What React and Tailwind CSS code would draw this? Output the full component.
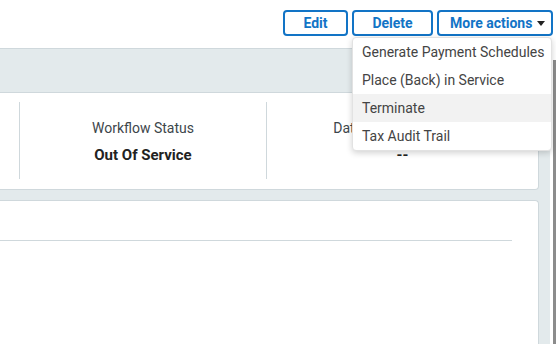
import React from "react";

const actions = ["Generate Payment Schedules", "Place (Back) in Service", "Terminate", "Tax Audit Trail"];

function App() {
    return (
        <div className="relative w-[556px] h-[344px] overflow-hidden bg-white flex flex-col font-['Roboto',sans-serif]">
            {/* top action bar */}
            <div className="h-[48px] shrink-0 flex justify-end items-start pt-[10px] pr-[3px] gap-[4px]">
                <button className="h-[26px] w-[65px] border-2 border-[#1274c6] rounded-[4px] text-[14px] font-bold text-[#1274c6] leading-none">
                    Edit
                </button>
                <button className="h-[26px] w-[81px] border-2 border-[#1274c6] rounded-[4px] text-[14px] font-bold text-[#1274c6] leading-none">
                    Delete
                </button>
                <button className="h-[26px] w-[116px] border-2 border-[#1274c6] rounded-[4px] text-[14px] font-bold text-[#1274c6] leading-none whitespace-nowrap flex items-center justify-between pl-[11px] pr-[6px]">
                    More actions
                    <span className="w-0 h-0 border-l-[4px] border-r-[4px] border-t-[5px] border-l-transparent border-r-transparent border-t-[#222]" />
                </button>
            </div>

            <div className="flex flex-1 min-h-0">
                {/* main panel */}
                <div className="w-[550px] flex flex-col bg-[#e3eaec] border-t border-[#cfd8dc]">
                    <div className="h-[43px] shrink-0" />
                    <div className="h-[98px] shrink-0 mr-[11px] bg-white border border-l-0 border-[#cfd8dc] rounded-r-[4px] flex pt-[9px] pb-[10px]">
                        <div className="w-[20px] border-r border-[#cfd8dc]" />
                        <div className="w-[247px] border-r border-[#cfd8dc] flex flex-col items-center pt-[16px]">
                            <div className="text-[14px] text-[#3d464b] leading-[20px] whitespace-nowrap">Workflow Status</div>
                            <div className="text-[15px] font-bold text-[#222] leading-[20px] mt-[7px] whitespace-nowrap">Out Of Service</div>
                        </div>
                        <div className="flex-1 flex flex-col items-center pt-[16px]">
                            <div className="text-[14px] text-[#3d464b] leading-[20px] whitespace-nowrap">Date Placed in Service</div>
                            <div className="text-[15px] font-bold text-[#222] leading-[20px] mt-[7px]">--</div>
                        </div>
                    </div>
                    <div className="h-[10px] shrink-0" />
                    <div className="flex-1 mr-[11px] bg-white border border-l-0 border-b-0 border-[#cfd8dc] rounded-tr-[4px] pt-[39px]">
                        <div className="w-[512px] border-t border-[#cfd8dc]" />
                    </div>
                </div>
                {/* scrollbar */}
                <div className="w-[6px] flex justify-end pt-[12px]">
                    <div className="w-[3px] bg-[#8c8c8c]" />
                </div>
            </div>

            {/* more actions menu */}
            <div className="absolute left-[352px] top-[37px] w-[200px] bg-white rounded-[4px] border border-[#e2e2e2] shadow-[0_2px_6px_rgba(0,0,0,0.18)]">
                {actions.map((a) => (
                    <div
                        key={a}
                        className={
                            a === "Terminate"
                                ? "h-[28px] flex items-center px-[9px] text-[14px] text-[#444] bg-[#f2f2f2] whitespace-nowrap"
                                : "h-[28px] flex items-center px-[9px] text-[14px] text-[#444] whitespace-nowrap"
                        }
                    >
                        {a}
                    </div>
                ))}
            </div>
        </div>
    );
}

export default App;
